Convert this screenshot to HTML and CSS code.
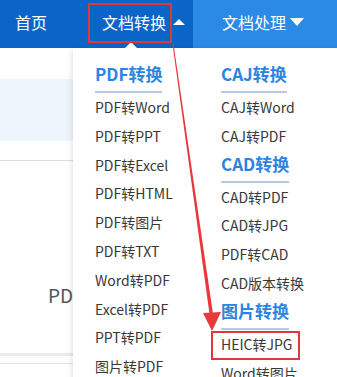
FILE: index.html
```html
<!DOCTYPE html>
<html lang="zh-CN">
<head>
  <meta charset="UTF-8">
  <meta content="width=device-width, initial-scale=1.0" name="viewport">
  <title>文档转换</title>
  <link rel="stylesheet" href="styles.css">
</head>
<body>
  <header class="nav">
    <div class="nav-main">
      <a class="nav-link" href="#">首页</a>
      <a class="nav-link" href="#">文档转换<span class="caret-up"></span></a>
    </div>
    <div class="nav-sub">
      <a class="nav-link" href="#">文档处理<span class="caret-down"></span></a>
    </div>
  </header>

  <main class="page">
    <div class="banner"></div>
    <div class="tool-list">
      <span class="tool-name">PDF转换</span>
    </div>
    <div class="footer-line"></div>
  </main>

  <!-- dropdown menu for 文档转换 -->
  <div class="dropdown">
    <span class="dropdown-arrow"></span>
    <div class="menu-col first">
      <h3 class="menu-title">PDF转换</h3>
      <a class="menu-item" href="#">PDF转Word</a>
      <a class="menu-item" href="#">PDF转PPT</a>
      <a class="menu-item" href="#">PDF转Excel</a>
      <a class="menu-item" href="#">PDF转HTML</a>
      <a class="menu-item" href="#">PDF转图片</a>
      <a class="menu-item" href="#">PDF转TXT</a>
      <a class="menu-item" href="#">Word转PDF</a>
      <a class="menu-item" href="#">Excel转PDF</a>
      <a class="menu-item" href="#">PPT转PDF</a>
      <a class="menu-item" href="#">图片转PDF</a>
    </div>
    <div class="menu-col">
      <h3 class="menu-title">CAJ转换</h3>
      <a class="menu-item" href="#">CAJ转Word</a>
      <a class="menu-item" href="#">CAJ转PDF</a>
      <h3 class="menu-title">CAD转换</h3>
      <a class="menu-item" href="#">CAD转PDF</a>
      <a class="menu-item" href="#">CAD转JPG</a>
      <a class="menu-item" href="#">PDF转CAD</a>
      <a class="menu-item" href="#">CAD版本转换</a>
      <h3 class="menu-title">图片转换</h3>
      <a class="menu-item" href="#">HEIC转JPG</a>
      <a class="menu-item" href="#">Word转图片</a>
    </div>
  </div>

  <!-- red annotation marks over the screenshot -->
  <svg class="annot" width="337" height="377" viewBox="0 0 337 377">
    <rect x="89" y="4" width="82" height="38" fill="none" stroke="#e0383a" stroke-width="2"/>
    <polygon points="172.5,44 173.5,44 213,314 209.5,314" fill="#e8383a"/>
    <polygon points="203,313 221,312 212,331" fill="#e8383a"/>
    <rect x="212" y="332" width="87" height="27" fill="none" stroke="#e0383a" stroke-width="2"/>
  </svg>
</body>
</html>
```

FILE: styles.css
```css
body {
    margin: 0;
    width: 337px;
    height: 377px;
    overflow: hidden;
    position: relative;
    background: #fff;
    font-family: "Noto Sans CJK SC", "Noto Sans", sans-serif;
}
a {
    text-decoration: none;
}
.nav {
    display: flex;
    height: 48px;
}
.nav-main {
    display: flex;
    width: 193px;
    padding-left: 15px;
    gap: 55px;
    box-sizing: border-box;
    background: #0b64c8;
}
.nav-sub {
    flex: 1;
    display: flex;
    padding-left: 29px;
    background: #2b8ae6;
}
.nav-link {
    display: flex;
    align-items: center;
    height: 44px;
    color: #fff;
    font-size: 16px;
}
.caret-up {
    margin-left: 7px;
    border-left: 6px solid transparent;
    border-right: 6px solid transparent;
    border-bottom: 6px solid #fff;
}
.caret-down {
    margin-left: 4px;
    border-left: 7px solid transparent;
    border-right: 7px solid transparent;
    border-top: 8px solid #fff;
}
.banner {
    margin-top: 31px;
    height: 62px;
    background: #eef5fd;
}
.tool-list {
    margin-top: 19px;
    height: 192px;
    border-top: 1px solid #dcdcdc;
    border-bottom: 3px solid #ebebeb;
    padding-left: 48px;
}
.tool-name {
    display: block;
    padding-top: 124px;
    line-height: 20px;
    font-size: 19px;
    color: #555;
}
.footer-line {
    margin-top: 7px;
    border-top: 1px solid #e4e4e4;
}

/* dropdown */
.dropdown {
    position: absolute;
    top: 48px;
    left: 73px;
    right: 0;
    height: 340px;
    display: flex;
    padding: 13px 0 0 22px;
    background: #fff;
    box-shadow: -1px 2px 6px rgba(0, 0, 0, 0.12);
}
.dropdown-arrow {
    position: absolute;
    top: -6px;
    left: 52px;
    border-left: 6px solid transparent;
    border-right: 6px solid transparent;
    border-bottom: 6px solid #fff;
}
.menu-col {
    display: flex;
    flex-direction: column;
    align-items: flex-start;
}
.menu-col.first {
    width: 126px;
}
.menu-title {
    margin: 0;
    height: 26px;
    line-height: 26px;
    padding-bottom: 4px;
    border-bottom: 2px solid #b9cbe3;
    font-size: 17px;
    font-weight: bold;
    color: #2b84e3;
}
.menu-item {
    display: block;
    height: 28.8px;
    line-height: 28.8px;
    font-size: 14px;
    color: #383838;
    white-space: nowrap;
}

.annot {
    position: absolute;
    top: 0;
    left: 0;
}
```
